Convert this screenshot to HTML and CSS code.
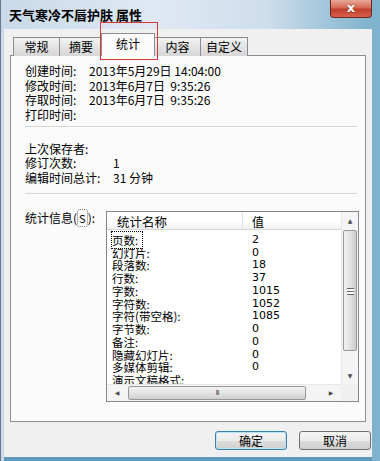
FILE: index.html
```html
<!DOCTYPE html>
<html lang="zh-CN">
<head>
  <meta charset="UTF-8" />
  <title>天气寒冷不唇护肤 属性</title>
  <link rel="stylesheet" href="styles.css">
</head>
<body>

  <div class="window">
    <div class="titlebar">
      <span class="title">天气寒冷不唇护肤 属性</span>
      <span class="close">x</span>
    </div>

    <div class="client">
      <div class="tabs">
        <div class="tab w46">常规</div>
        <div class="tab w43">摘要</div>
        <div class="tab active">统计</div>
        <div class="tab w46">内容</div>
        <div class="tab w48">自定义</div>
      </div>

      <div class="panel">
        <div class="row"><span class="label">创建时间:</span><span class="value">2013年5月29日 14:04:00</span></div>
        <div class="row"><span class="label">修改时间:</span><span class="value">2013年6月7日  9:35:26</span></div>
        <div class="row"><span class="label">存取时间:</span><span class="value">2013年6月7日  9:35:26</span></div>
        <div class="row"><span class="label">打印时间:</span><span class="value"></span></div>

        <div class="sep first"></div>

        <div class="row"><span class="label wide">上次保存者:</span><span class="value"></span></div>
        <div class="row"><span class="label wide">修订次数:</span><span class="value">1</span></div>
        <div class="row"><span class="label wide">编辑时间总计:</span><span class="value">31 分钟</span></div>

        <div class="sep second"></div>

        <div class="stats">
          <span class="label stats-label">统计信息(<u>S</u>):</span>
          <div class="listbox">
            <div class="list-main">
              <div class="list-head">
                <span class="col-name">统计名称</span>
                <span class="col-value">值</span>
              </div>
              <div class="list-body">
                <div class="item"><span class="col-name"><span class="focus">页数:</span></span><span class="col-value">2</span></div>
                <div class="item"><span class="col-name">幻灯片:</span><span class="col-value">0</span></div>
                <div class="item"><span class="col-name">段落数:</span><span class="col-value">18</span></div>
                <div class="item"><span class="col-name">行数:</span><span class="col-value">37</span></div>
                <div class="item"><span class="col-name">字数:</span><span class="col-value">1015</span></div>
                <div class="item"><span class="col-name">字符数:</span><span class="col-value">1052</span></div>
                <div class="item"><span class="col-name">字符(带空格):</span><span class="col-value">1085</span></div>
                <div class="item"><span class="col-name">字节数:</span><span class="col-value">0</span></div>
                <div class="item"><span class="col-name">备注:</span><span class="col-value">0</span></div>
                <div class="item"><span class="col-name">隐藏幻灯片:</span><span class="col-value">0</span></div>
                <div class="item"><span class="col-name">多媒体剪辑:</span><span class="col-value">0</span></div>
                <div class="item"><span class="col-name">演示文稿格式:</span><span class="col-value"></span></div>
              </div>
            </div>
            <div class="vscroll">
              <div class="arrow">&#9650;</div>
              <div class="vthumb"><span class="grip"></span></div>
              <div class="vtrack"></div>
              <div class="arrow">&#9660;</div>
            </div>
            <div class="hscroll">
              <div class="arrow">&#9664;</div>
              <div class="hthumb"><span class="hgrip">III</span></div>
              <div class="htrack"></div>
              <div class="arrow">&#9654;</div>
            </div>
            <div class="corner"></div>
          </div>
        </div>
      </div>

      <div class="buttons">
        <button class="btn default">确定</button>
        <button class="btn">取消</button>
      </div>
    </div>

    <div class="highlight"></div>
  </div>

</body>
</html>
```

FILE: styles.css
```css
* {
  margin: 0;
  padding: 0;
  box-sizing: border-box;
}

body {
  font-family: "Noto Sans CJK SC", "DejaVu Sans", sans-serif;
  font-size: 12px;
  color: #000;
  background: #fff;
}

.window {
  position: relative;
  width: 380px;
  height: 461px;
  padding: 0 8px 4px 3px;
  display: flex;
  flex-direction: column;
  background: linear-gradient(90deg, #c9d9e9 0%, #dfe9f3 40%, #cfdeec 70%, #7fb2cc 98%);
  border-left: 1px solid #6a7a8a;
}

.titlebar {
  height: 29px;
  display: flex;
  justify-content: space-between;
  align-items: flex-start;
  margin-right: -8px;
}

.title {
  margin-top: 6px;
  margin-left: 5px;
  font-size: 13px;
  font-weight: bold;
  line-height: 17px;
}

.close {
  width: 42px;
  height: 18px;
  margin-right: 8px;
  border: 1px solid #6e2a22;
  border-top: none;
  border-radius: 0 0 4px 4px;
  background: linear-gradient(#e8a898 0%, #d66a55 45%, #c0402d 55%, #d8604a 100%);
  color: #fff;
  font-family: "DejaVu Sans", sans-serif;
  font-weight: bold;
  font-size: 13px;
  line-height: 16px;
  text-align: center;
  text-shadow: 0 0 2px #6e2a22;
}

.client {
  flex: 1;
  display: flex;
  flex-direction: column;
  background: #f0f0f0;
  padding: 0 6px 0 6px;
  border-bottom: 4px solid #5d9bb8;
  margin-bottom: -4px;
}

.tabs {
  display: flex;
  align-items: flex-end;
  height: 27px;
  padding-left: 3px;
  position: relative;
  z-index: 1;
  margin-bottom: -1px;
}

.tab {
  height: 19px;
  border: 1px solid #8a8c8f;
  border-bottom: none;
  margin-right: -1px;
  background: linear-gradient(#f3f3f3, #e3e3e3 50%, #d6d6d6);
  text-align: center;
  line-height: 18px;
  font-size: 12px;
}

.w46 { width: 47px; }
.w43 { width: 44px; }
.w48 { width: 48px; }

.tab.active {
  width: 54px;
  height: 23px;
  margin-left: -1px;
  margin-right: -1px;
  background: #fbfbfb;
  line-height: 20px;
  position: relative;
  z-index: 2;
}

.panel {
  height: 367px;
  background: #fbfbfb;
  border: 1px solid #8a8c8f;
  padding: 8px 0 0 14px;
}

.row {
  display: flex;
  height: 14.7px;
  line-height: 14.7px;
  white-space: pre;
}

.label {
  width: 64px;
}

.label.wide {
  width: 88px;
}

.sep {
  width: 332px;
  border-top: 1px solid #d5d5d5;
  border-bottom: 1px solid #fff;
}

.sep.first {
  margin: 3px 0 14px;
}

.sep.second {
  margin: 7px 0 16px;
}

.stats {
  display: flex;
  align-items: flex-start;
}

.stats-label {
  width: 81px;
  line-height: 14px;
}

.stats-label u {
  text-decoration: none;
  border: 1px dotted #777;
  border-radius: 3px;
  padding: 0 1px;
  font-size: 11px;
}

.listbox {
  width: 253px;
  height: 191px;
  border: 1px solid #828790;
  background: #fff;
  display: grid;
  grid-template-columns: 1fr 17px;
  grid-template-rows: 1fr 17px;
}

.list-main {
  overflow: hidden;
}

.list-head {
  display: flex;
  height: 18px;
  line-height: 19px;
  background: linear-gradient(#ffffff, #ffffff 50%, #f1f2f4);
  border-bottom: 1px solid #d5d5d5;
}

.list-head .col-name {
  border-right: 1px solid #dde1e6;
  padding-left: 10px;
  font-size: 12.5px;
}

.col-name {
  width: 136px;
  flex-shrink: 0;
  padding-left: 5px;
}

.col-value {
  padding-left: 9px;
}

.list-body {
  padding-top: 4px;
}

.item {
  display: flex;
  height: 12.75px;
  line-height: 12.75px;
  font-size: 11.5px;
}

.item .col-value {
  font-family: "DejaVu Sans", sans-serif;
  font-size: 11px;
}

.focus {
  outline: 1px dotted #000;
  outline-offset: 0;
  padding-right: 4px;
}

.vscroll {
  display: flex;
  flex-direction: column;
  background: #f4f4f4;
  border-left: 1px solid #e8e8e8;
}

.arrow {
  height: 17px;
  flex-shrink: 0;
  text-align: center;
  font-size: 6px;
  line-height: 17px;
  color: #4d4d4d;
  font-family: "DejaVu Sans", sans-serif;
}

.vthumb {
  height: 121px;
  margin: 1px 1px 0 1px;
  border: 1px solid #989898;
  border-radius: 2px;
  background: linear-gradient(90deg, #f0f0f0, #e2e2e2 50%, #cbcbcb);
  display: flex;
  align-items: flex-end;
  justify-content: center;
  padding-bottom: 55px;
}

.grip {
  width: 7px;
  height: 7px;
  border-top: 1px solid #666;
  border-bottom: 1px solid #666;
  background: linear-gradient(#fff 2px, #666 2px, #666 3px, #fff 3px);
}

.vtrack {
  flex: 1;
}

.hscroll {
  display: flex;
  background: #f4f4f4;
  border-top: 1px solid #e8e8e8;
}

.hscroll .arrow {
  width: 20px;
  height: 16px;
  line-height: 16px;
}

.hthumb {
  width: 178px;
  margin: 1px 0 1px 1px;
  border: 1px solid #989898;
  border-radius: 2px;
  background: linear-gradient(#f2f2f2, #e4e4e4 50%, #cfcfcf);
  display: flex;
  align-items: center;
  justify-content: center;
}

.hgrip {
  font-family: "DejaVu Sans", sans-serif;
  font-size: 7px;
  color: #555;
  letter-spacing: -1px;
}

.htrack {
  flex: 1;
}

.corner {
  background: #f0f0f0;
}

.buttons {
  display: flex;
  justify-content: flex-end;
  gap: 12px;
  padding-top: 9px;
  margin-right: -5px;
}

.btn {
  width: 72px;
  height: 19px;
  font-family: "Noto Sans CJK SC", sans-serif;
  font-size: 12px;
  line-height: 15px;
  border: 1px solid #707070;
  border-radius: 3px;
  background: linear-gradient(#f4f4f4, #ebebeb 50%, #dddddd 51%, #cfcfcf);
  color: #000;
}

.btn.default {
  border-color: #3c7fb1;
  box-shadow: inset 0 0 0 1px #b6e4fa;
}

.highlight {
  position: absolute;
  left: 99px;
  top: 22px;
  width: 58px;
  height: 38px;
  border: 1px solid #d83838;
  pointer-events: none;
  z-index: 5;
}
```
